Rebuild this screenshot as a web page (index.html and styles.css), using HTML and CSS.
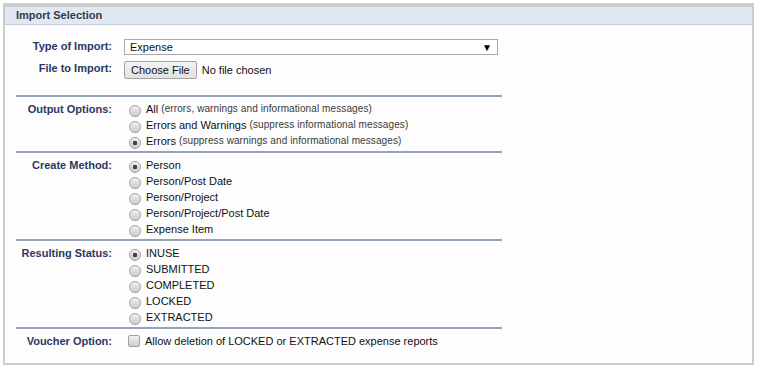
FILE: index.html
```html
<!DOCTYPE html>
<html lang="en">
<head>
    <meta charset="UTF-8">
    <title>Import Selection</title>
    <link rel="stylesheet" href="styles.css">
</head>
<body>
    <div class="panel">
        <div class="panel-title">Import Selection</div>
        <div class="panel-body">
            <div class="field field-type">
                <div class="field-label">Type of Import:</div>
                <div class="select-box">
                    <select>
                        <option>Expense</option>
                    </select>
                    <span class="select-arrow">&#9660;</span>
                </div>
            </div>
            <div class="field field-file">
                <div class="field-label">File to Import:</div>
                <div><input type="file"></div>
            </div>

            <div class="field-group">
                <div class="field-label">Output Options:</div>
                <div class="option-list">
                    <label class="option"><input type="radio" name="output"> All <small>(errors, warnings and informational messages)</small></label>
                    <label class="option"><input type="radio" name="output"> Errors and Warnings <small>(suppress informational messages)</small></label>
                    <label class="option"><input type="radio" name="output" checked> Errors <small>(suppress warnings and informational messages)</small></label>
                </div>
            </div>

            <div class="field-group">
                <div class="field-label">Create Method:</div>
                <div class="option-list">
                    <label class="option"><input type="radio" name="method" checked> Person</label>
                    <label class="option"><input type="radio" name="method"> Person/Post Date</label>
                    <label class="option"><input type="radio" name="method"> Person/Project</label>
                    <label class="option"><input type="radio" name="method"> Person/Project/Post Date</label>
                    <label class="option"><input type="radio" name="method"> Expense Item</label>
                </div>
            </div>

            <div class="field-group">
                <div class="field-label">Resulting Status:</div>
                <div class="option-list">
                    <label class="option"><input type="radio" name="status" checked> INUSE</label>
                    <label class="option"><input type="radio" name="status"> SUBMITTED</label>
                    <label class="option"><input type="radio" name="status"> COMPLETED</label>
                    <label class="option"><input type="radio" name="status"> LOCKED</label>
                    <label class="option"><input type="radio" name="status"> EXTRACTED</label>
                </div>
            </div>

            <div class="field-group last">
                <div class="field-label">Voucher Option:</div>
                <div class="option-list">
                    <label class="option"><input type="checkbox"> Allow deletion of LOCKED or EXTRACTED expense reports</label>
                </div>
            </div>
        </div>
    </div>
</body>
</html>
```

FILE: styles.css
```css
body {
    margin: 3px 4px 3px 3px;
    font-family: "Liberation Sans", Arial, sans-serif;
    font-size: 11px;
    color: #111;
    background: #fff;
}

/* panel frame */
.panel {
    border: 2px solid #cccccc;
    border-top-width: 4px;
    background: #fcfdfc;
}

.panel-title {
    height: 17px;
    line-height: 17px;
    padding-left: 11px;
    background: #e1e8f3;
    border-bottom: 1px solid #c3ccd8;
    font-weight: bold;
    color: #363a44;
}

.panel-body {
    padding: 14px 0 14px 11px;
}

/* label / value rows */
.field,
.field-group {
    display: grid;
    grid-template-columns: 96px 1fr;
    column-gap: 12px;
    width: 486px;
}

.field-label {
    padding-top: 1px;
    line-height: 13px;
    text-align: right;
    font-weight: bold;
    color: #2c3862;
}

.field-type {
    height: 16px;
    margin-bottom: 6px;
}

.field-file {
    height: 18px;
    margin-bottom: 16px;
}

/* select */
.select-box {
    display: flex;
    align-items: center;
    width: 372px;
    height: 14px;
    border: 1px solid #a9a9a9;
    background: #fff;
}

.select-box select {
    flex: 1;
    appearance: none;
    border: 0;
    padding: 0 5px;
    background: transparent;
    font: inherit;
    color: #111;
    outline: none;
}

.select-arrow {
    font-size: 10px;
    margin-right: 5px;
    color: #000;
}

/* file input */
input[type="file"] {
    font: inherit;
    color: #111;
}

input[type="file"]::file-selector-button {
    font: inherit;
    height: 18px;
    padding: 0 6px;
    margin: 0 5px 0 0;
    border: 1px solid #a3a3a3;
    border-radius: 2px;
    background: linear-gradient(#f2f2f2, #e2e2e2);
    color: #111;
}

/* option groups */
.field-group {
    border-top: 2px solid #95a4b8;
    padding: 4px 0 2px;
}

.field-group .field-label {
    padding-top: 2px;
}

.field-group.last {
    padding-bottom: 0;
}

.option {
    display: flex;
    align-items: flex-start;
    height: 16px;
    line-height: 16px;
    white-space: nowrap;
}

.option small {
    font-size: 10px;
    letter-spacing: 0.1px;
    color: #3a3a3a;
    margin-left: 3px;
}

.option input {
    appearance: none;
    flex: none;
    width: 12px;
    height: 12px;
    margin: 4px 5px 0 5px;
    border: 1px solid #a0a0a0;
    border-radius: 50%;
    background: linear-gradient(#f0f0f0, #cdcdcd);
}

.option input[type="radio"]:checked {
    background: radial-gradient(circle, #444 0 2px, transparent 2.6px), linear-gradient(#f0f0f0, #cdcdcd);
}

.option input[type="checkbox"] {
    border-radius: 2px;
    margin: 2px 5px 0 4px;
}
```
